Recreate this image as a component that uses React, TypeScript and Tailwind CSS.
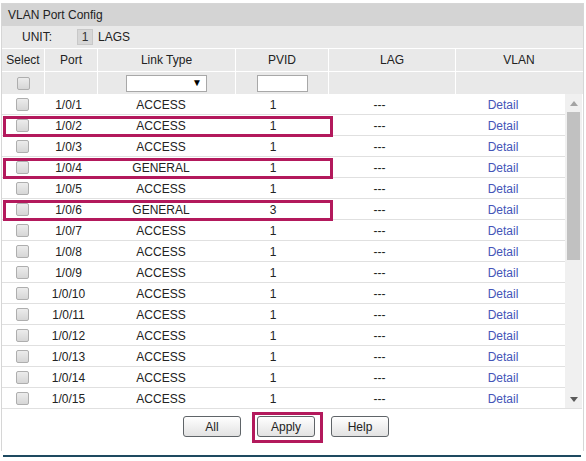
import React from "react";

const rows = [
  ["1/0/1", "ACCESS", "1"],
  ["1/0/2", "ACCESS", "1"],
  ["1/0/3", "ACCESS", "1"],
  ["1/0/4", "GENERAL", "1"],
  ["1/0/5", "ACCESS", "1"],
  ["1/0/6", "GENERAL", "3"],
  ["1/0/7", "ACCESS", "1"],
  ["1/0/8", "ACCESS", "1"],
  ["1/0/9", "ACCESS", "1"],
  ["1/0/10", "ACCESS", "1"],
  ["1/0/11", "ACCESS", "1"],
  ["1/0/12", "ACCESS", "1"],
  ["1/0/13", "ACCESS", "1"],
  ["1/0/14", "ACCESS", "1"],
  ["1/0/15", "ACCESS", "1"],
];
const highlighted = new Set(["1/0/2", "1/0/4", "1/0/6"]);

function Check() {
  return (
    <div className="w-[13px] h-[13px] rounded-[2px] border border-[#aeaeae] bg-gradient-to-b from-[#ececec] to-[#d6d6d6]" />
  );
}

function Btn({ label }: { label: string }) {
  return (
    <div className="w-[58px] h-[21px] rounded-[3px] border border-[#5f6468] bg-gradient-to-b from-[#ffffff] to-[#e2e2e2] flex items-center justify-center text-[12px] text-[#222]">
      {label}
    </div>
  );
}

export default function App() {
  return (
    <div
      className="w-[586px] h-[461px] bg-white text-[#222] text-[12px] leading-none overflow-hidden"
      style={{ fontFamily: '"Liberation Sans", Arial, sans-serif' }}
    >
      <div className="pt-[3px] pl-[1px]">
        <div className="w-[583px] h-[448px] border border-b-0 border-[#d6d6d6] flex flex-col">
          {/* title */}
          <div className="h-[22px] bg-[#d4d4d4] flex items-center pl-[6px]">VLAN Port Config</div>
          {/* unit row */}
          <div className="h-[22px] bg-[#e9e9e9] flex items-center">
            <span className="ml-[20px]">UNIT:</span>
            <div className="ml-[25px] w-[16px] h-[16px] bg-[#d7d7d7] border border-[#c8c8c8] flex items-center justify-center text-[#333]">1</div>
            <span className="ml-[5px]">LAGS</span>
          </div>
          {/* header row */}
          <div className="h-[23px] bg-[#e9e9e9] border-t border-white flex">
            <div className="w-[42px] flex items-center justify-center">Select</div>
            <div className="w-[53px] border-l border-white flex items-center justify-center">Port</div>
            <div className="w-[138px] border-l border-white flex items-center justify-center">Link Type</div>
            <div className="w-[93px] border-l border-white flex items-center justify-center">PVID</div>
            <div className="w-[127px] border-l border-white flex items-center justify-center">LAG</div>
            <div className="w-[127px] border-l border-white flex items-center justify-center">VLAN</div>
          </div>
          {/* filter row */}
          <div className="h-[23px] bg-[#e9e9e9] border-t border-white flex">
            <div className="w-[42px] flex items-center justify-center">
              <Check />
            </div>
            <div className="w-[53px] border-l border-white" />
            <div className="w-[138px] border-l border-white flex items-center justify-center">
              <div className="w-[81px] h-[17px] bg-white border border-[#a8a8a8] flex items-center justify-end pr-[4px] text-[10px] text-black">▼</div>
            </div>
            <div className="w-[93px] border-l border-white flex items-center justify-center">
              <div className="w-[51px] h-[17px] bg-white border border-[#a8a8a8]" />
            </div>
            <div className="w-[127px] border-l border-white" />
            <div className="w-[127px] border-l border-white" />
          </div>
          {/* body */}
          <div className="flex">
            <div className="w-[563px]">
              {rows.map(([port, type, pvid]) => (
                <div key={port} className="relative h-[21px] pt-[1px] border-b border-[#e0e0e0] flex items-center">
                  <div className="w-[41px] flex items-center justify-center">
                    <Check />
                  </div>
                  <div className="w-[51px] text-center">{port}</div>
                  <div className="w-[134px] text-center">{type}</div>
                  <div className="w-[90px] text-center">{pvid}</div>
                  <div className="w-[123px] text-center">---</div>
                  <div className="w-[124px] text-center text-[#4455b8]">Detail</div>
                  {highlighted.has(port) && (
                    <div className="absolute left-[1px] top-[1px] w-[330px] h-[21px] border-[3px] border-[#b3195c] z-10" />
                  )}
                </div>
              ))}
            </div>
            <div className="w-[17px] h-[315px] bg-[#f0f0f0] border-b border-[#e0e0e0] flex flex-col items-center">
              <div className="h-[18px] flex items-center justify-center">
                <svg width="8" height="5" viewBox="0 0 8 5">
                  <path d="M0 5 L4 0 L8 5 Z" fill="#a3a3a3" />
                </svg>
              </div>
              <div className="w-[13px] h-[148px] bg-[#c1c1c1]" />
              <div className="flex-1" />
              <div className="h-[18px] flex items-center justify-center">
                <svg width="8" height="5" viewBox="0 0 8 5">
                  <path d="M0 0 L8 0 L4 5 Z" fill="#5a5a5a" />
                </svg>
              </div>
            </div>
          </div>
          {/* buttons */}
          <div className="flex pl-[181px] pt-[7px] gap-[16px]">
            <Btn label="All" />
            <div className="relative">
              <Btn label="Apply" />
              <div className="absolute -left-[5px] -top-[4px] w-[71px] h-[31px] border-[3px] border-[#b3195c]" />
            </div>
            <Btn label="Help" />
          </div>
        </div>
        <div className="ml-[2px] mt-[4px] w-[578px] h-[2px] bg-[#1e4a60]" />
      </div>
    </div>
  );
}
